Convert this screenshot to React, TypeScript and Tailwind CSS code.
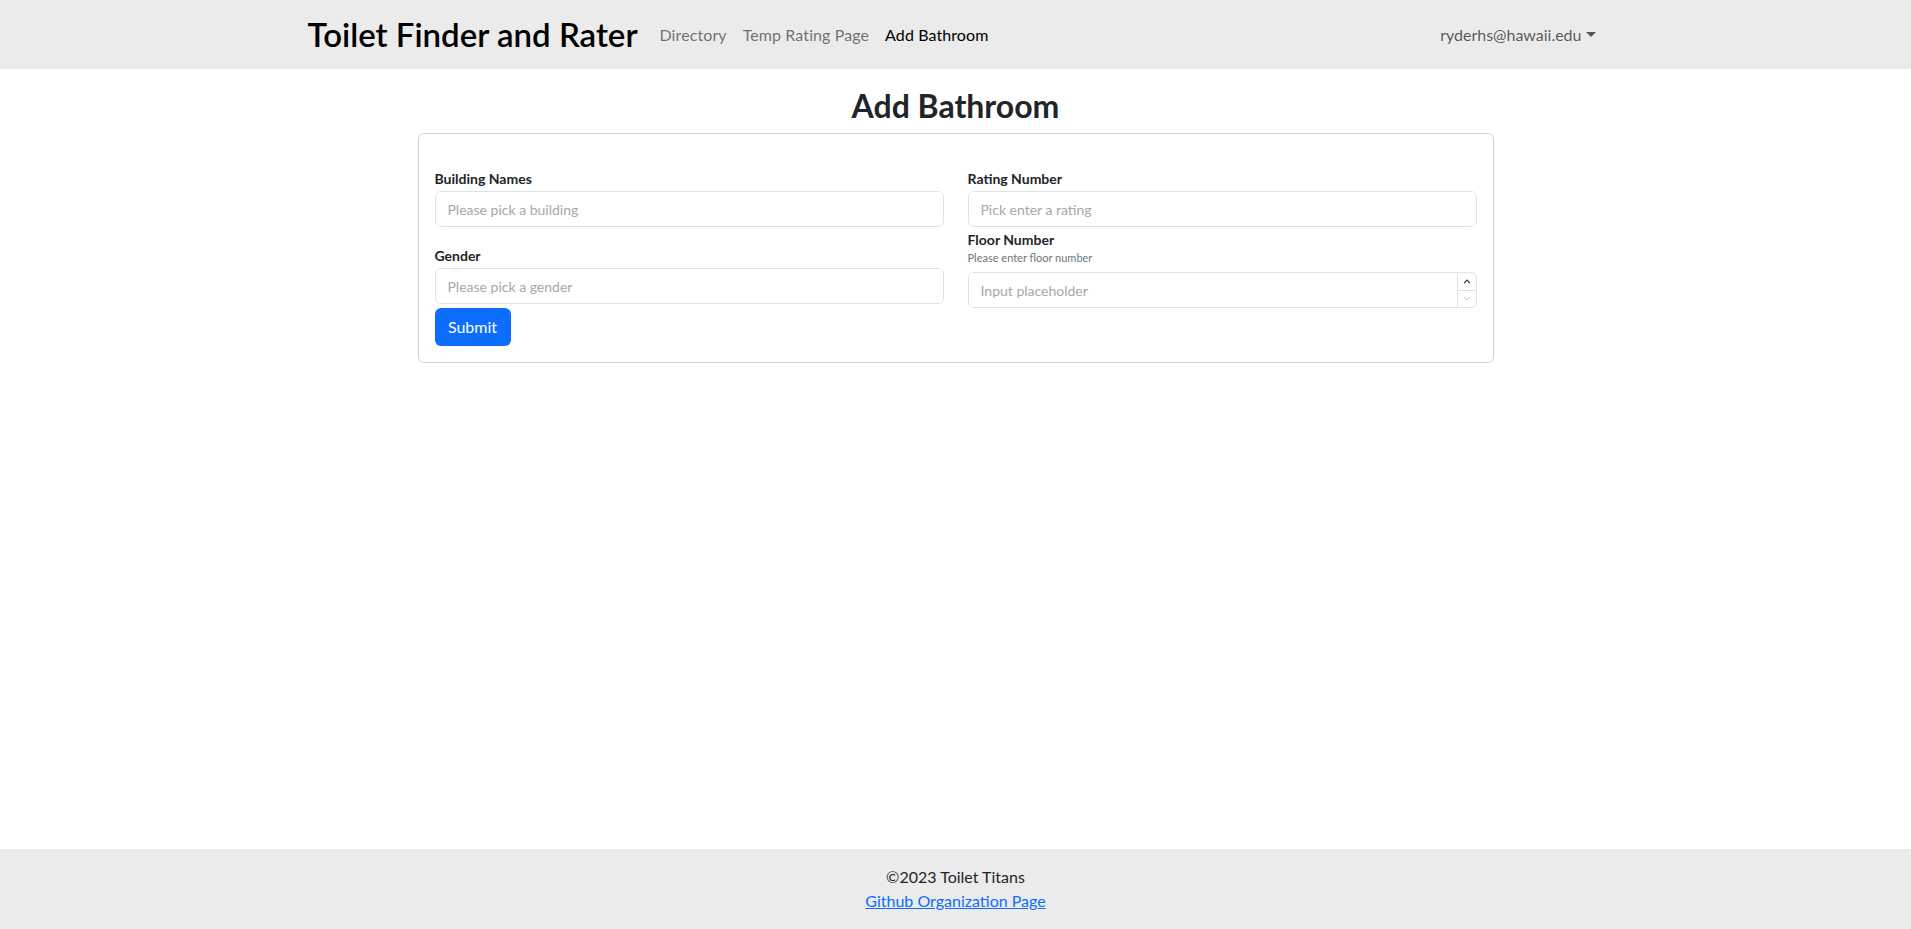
const navLinks = [
  { label: 'Directory', active: false },
  { label: 'Temp Rating Page', active: false },
  { label: 'Add Bathroom', active: true },
];

function Field({ label, placeholder, help, spinner }: { label: string; placeholder: string; help?: string; spinner?: boolean }) {
  return (
    <div className="flex flex-col">
      <label className="text-[14px] leading-[21px] font-bold text-[#212529]">{label}</label>
      {help && <p className="text-[11px] leading-[16px] text-[#6c757d] mb-[6px]">{help}</p>}
      <div className={`flex h-[36px] border border-[#dee2e6] rounded-[6px] overflow-hidden ${help ? '' : 'mt-[2px]'}`}>
        <input
          placeholder={placeholder}
          className="flex-1 min-w-0 px-3 text-[14px] text-[#212529] placeholder:text-[#a3a8ad] outline-none bg-white"
        />
        {spinner && (
          <div className="w-[19px] flex flex-col border-l border-[#dee2e6]">
            <div className="flex-1 flex items-center justify-center border-b border-[#dee2e6]">
              <svg width="8" height="5" viewBox="0 0 8 5" fill="none" stroke="#333" strokeWidth="1.2">
                <path d="M1 4.2L4 1.2L7 4.2" />
              </svg>
            </div>
            <div className="flex-1 flex items-center justify-center">
              <svg width="8" height="5" viewBox="0 0 8 5" fill="none" stroke="#c8c8c8" strokeWidth="1">
                <path d="M1 1L4 4L7 1" />
              </svg>
            </div>
          </div>
        )}
      </div>
    </div>
  );
}

export default function App() {
  return (
    <div className="min-h-screen flex flex-col bg-white text-[#212529] font-['Lato',sans-serif]">
      <nav className="bg-[#ebebeb] h-[69px]">
        <div className="w-[1320px] mx-auto px-3 h-full flex items-center">
          <a className="w-[328px] mr-4 mb-[2px] whitespace-nowrap text-[33px] leading-[38px] font-semibold text-black">
            Toilet Finder and Rater
          </a>
          <ul className="flex items-center">
            {navLinks.map((link) => (
              <li key={link.label}>
                <a className={`px-2 text-[16px] leading-[24px] tracking-[0.1px] ${link.active ? 'text-black' : 'text-black/55'}`}>
                  {link.label}
                </a>
              </li>
            ))}
          </ul>
          <div className="ml-auto px-2 text-[16px] leading-[24px] text-black/65 flex items-center">
            ryderhs@hawaii.edu
            <span className="ml-[4px] inline-block border-x-[5px] border-t-[5px] border-b-0 border-x-transparent border-t-[#555]" />
          </div>
        </div>
      </nav>

      <main className="pt-[18px]">
        <h2 className="text-center text-[32px] leading-[38px] font-bold mb-[8px]">Add Bathroom</h2>
        <div className="w-[1076px] mx-auto border border-black/[0.175] rounded-[6px] px-4 pt-[34px] pb-4">
          <div className="grid grid-cols-2 gap-x-6 items-start">
            <div className="flex flex-col">
              <Field label="Building Names" placeholder="Please pick a building" />
              <div className="mt-[18px]">
                <Field label="Gender" placeholder="Please pick a gender" />
              </div>
              <div className="mt-[4px]">
                <button className="h-[38px] w-[76px] rounded-[6px] bg-[#0d6efd] text-white text-[16px]">Submit</button>
              </div>
            </div>
            <div className="flex flex-col">
              <Field label="Rating Number" placeholder="Pick enter a rating" />
              <div className="mt-[2px]">
                <Field label="Floor Number" placeholder="Input placeholder" help="Please enter floor number" spinner />
              </div>
            </div>
          </div>
        </div>
      </main>

      <footer className="mt-auto bg-[#ebebeb] py-4 text-center text-[16px] leading-[24px]">
        <p>©2023 Toilet Titans</p>
        <a className="text-[#0d6efd] underline">Github Organization Page</a>
      </footer>
    </div>
  );
}
